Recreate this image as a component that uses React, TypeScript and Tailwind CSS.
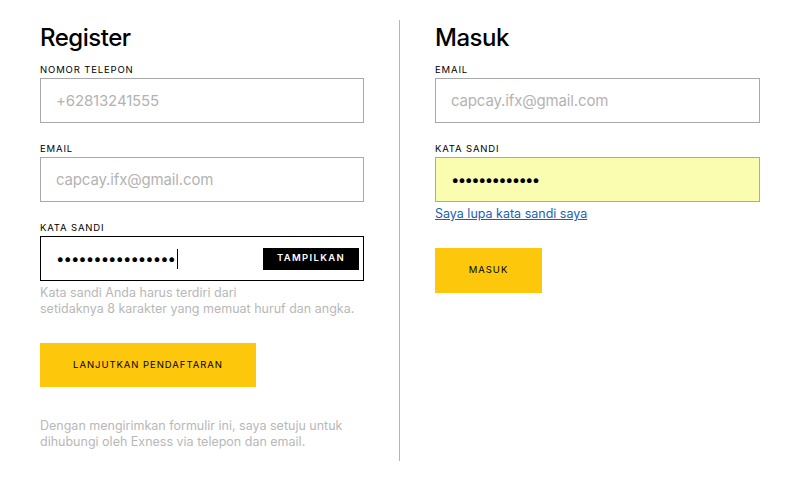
import React from "react";

function Label({ children }: { children: React.ReactNode }) {
  return (
    <div className="h-[12px] text-[9.5px] leading-[12px] tracking-[0.09em] text-black mb-[2px]">
      {children}
    </div>
  );
}

function TextField({ label, placeholder }: { label: string; placeholder: string }) {
  return (
    <div>
      <Label>{label}</Label>
      <div className="h-[45px] border border-[#a9a9a9] flex items-center pl-[15px] pt-[2px]">
        <span className="text-[15px] tracking-[-0.01em] text-[#b3b3b3]">{placeholder}</span>
      </div>
    </div>
  );
}

export default function App() {
  return (
    <div
      className="w-[809px] h-[484px] bg-white flex pt-[20px] text-black"
      style={{ fontFamily: "Inter, 'Liberation Sans', sans-serif" }}
    >
      {/* Register */}
      <div className="w-[324px] ml-[40px] flex flex-col">
        <h1 className="text-[24px] leading-[32px] font-medium tracking-[-0.02em] mt-[2px] mb-[10px]">
          Register
        </h1>
        <div className="flex flex-col gap-[20px]">
          <TextField label="NOMOR TELEPON" placeholder="+62813241555" />
          <TextField label="EMAIL" placeholder="capcay.ifx@gmail.com" />
          <div>
            <Label>KATA SANDI</Label>
            <div className="h-[45px] border border-black flex items-center justify-between pl-[15px] pr-[4px]">
              <div className="flex items-center">
                <span className="text-[15px] tracking-[-1px] leading-none">
                  ••••••••••••••••
                </span>
                <span className="w-px h-[20px] bg-black ml-[2px]" />
              </div>
              <button className="w-[96px] h-[22px] bg-black text-white text-[9.5px] font-semibold tracking-[0.14em]">
                TAMPILKAN
              </button>
            </div>
            <p className="mt-[4px] text-[12.5px] leading-[16px] text-[#b8b8b8]">
              Kata sandi Anda harus terdiri dari
              <br />
              setidaknya 8 karakter yang memuat huruf dan angka.
            </p>
          </div>
        </div>
        <button className="mt-[26px] w-[216px] h-[44px] bg-[#fdc70c] text-[9.5px] tracking-[0.1em]">
          LANJUTKAN PENDAFTARAN
        </button>
        <p className="mt-[31px] text-[12.5px] leading-[16px] text-[#b8b8b8]">
          Dengan mengirimkan formulir ini, saya setuju untuk
          <br />
          dihubungi oleh Exness via telepon dan email.
        </p>
      </div>

      {/* divider */}
      <div className="ml-[35px] w-px h-[441px] bg-[#b5b5b5]" />

      {/* Masuk */}
      <div className="w-[325px] ml-[35px] flex flex-col">
        <h1 className="text-[24px] leading-[32px] font-medium tracking-[-0.02em] mt-[2px] mb-[10px]">
          Masuk
        </h1>
        <div className="flex flex-col gap-[20px]">
          <TextField label="EMAIL" placeholder="capcay.ifx@gmail.com" />
          <div>
            <Label>KATA SANDI</Label>
            <div className="h-[45px] border border-[#a9a9a9] bg-[#fafdb0] flex items-center pl-[15px]">
              <span className="text-[15px] tracking-[-1.7px] leading-none">•••••••••••••</span>
            </div>
            <a href="#" className="block mt-[4px] text-[12.5px] leading-[16px] text-[#1a5fb4] underline">
              Saya lupa kata sandi saya
            </a>
          </div>
        </div>
        <button className="mt-[26px] w-[107px] h-[45px] bg-[#fdc70c] text-[9.5px] tracking-[0.1em]">
          MASUK
        </button>
      </div>
    </div>
  );
}
